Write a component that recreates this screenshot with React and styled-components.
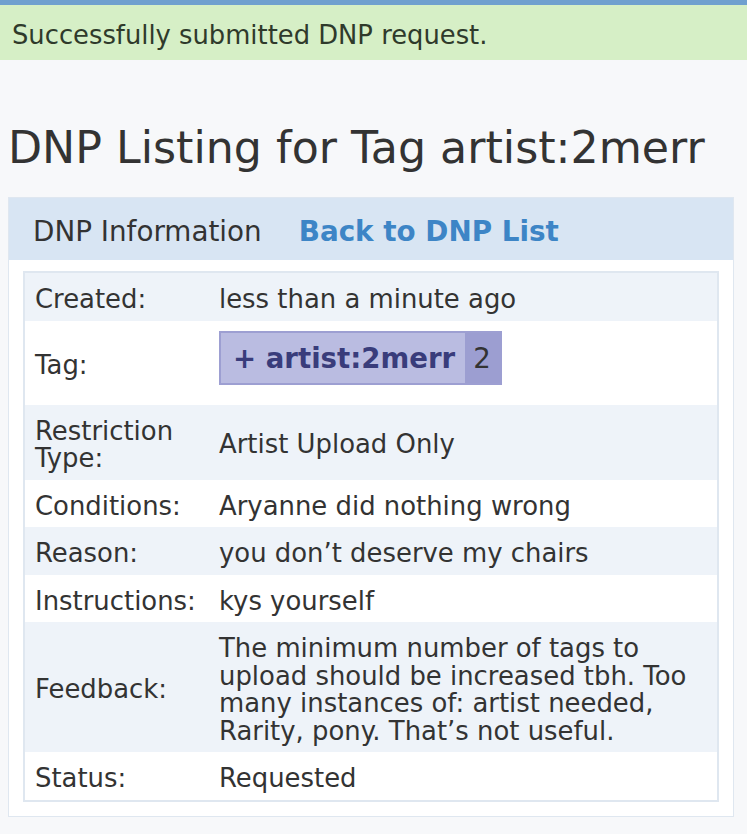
import styled, { createGlobalStyle } from 'styled-components';

const GlobalStyle = createGlobalStyle`
  body {
    margin: 0;
    background: #f7f8fa;
    font-family: "DejaVu Sans", Verdana, sans-serif;
    color: #333;
  }
`;

const TopBar = styled.div`
  height: 5px;
  background: #70a0cf;
`;

const Flash = styled.div`
  background: #d6efc6;
  height: 55px;
  box-sizing: border-box;
  padding: 4px 12px 0;
  display: flex;
  align-items: center;
  font-size: 25.8px;
  color: #2f3a2b;
`;

const Content = styled.div`
  padding: 0 8px;
`;

const Title = styled.h1`
  margin: 58px 0 19px;
  font-weight: normal;
  font-size: 44.3px;
  line-height: 60px;
  color: #333;
`;

const Block = styled.div`
  border: 1px solid #dfe7f0;
  width: 726px;
  box-sizing: border-box;
`;

const BlockHeader = styled.div`
  background: #d8e5f3;
  height: 62px;
  box-sizing: border-box;
  padding: 4px 24px 0;
  display: flex;
  align-items: center;
  gap: 37px;
  font-size: 27.8px;
`;

const HeaderLink = styled.a`
  color: #3d85c6;
  font-weight: bold;
  text-decoration: none;
`;

const BlockBody = styled.div`
  background: #fff;
  padding: 11px 14px 14px;
`;

const Table = styled.table`
  width: 100%;
  border-collapse: collapse;
  border: 2px solid #dfe7f0;
  font-size: 25.9px;
  line-height: 27.5px;

  tr:nth-child(odd) {
    background: #eef3f9;
  }
`;

const Label = styled.td`
  width: 174px;
  padding: 13px 10px 7px;
  vertical-align: middle;
`;

const Value = styled.td`
  padding: 13px 0 7px 0;
  vertical-align: middle;
`;

const TagBox = styled.span`
  display: inline-flex;
  align-items: stretch;
  margin: -3px 0 13px;
  border: 2px solid #9d9fd2;
  background: #babce1;
  height: 54px;
  box-sizing: border-box;
  font-size: 27.6px;
  vertical-align: top;
`;

const TagName = styled.span`
  display: flex;
  align-items: center;
  padding: 2px 10px 0 12px;
  color: #393c7b;
  font-weight: bold;
`;

const TagCount = styled.span`
  display: flex;
  align-items: center;
  padding: 2px 9px 0 8px;
  background: #9c9ed1;
  color: #333;
`;

const rows = [
  ['Created:', 'less than a minute ago'],
  ['Tag:', 'tag'],
  ['Restriction Type:', 'Artist Upload Only'],
  ['Conditions:', 'Aryanne did nothing wrong'],
  ['Reason:', 'you don\u2019t deserve my chairs'],
  ['Instructions:', 'kys yourself'],
  [
    'Feedback:',
    'The minimum number of tags to upload should be increased tbh. Too many instances of: artist needed, Rarity, pony. That\u2019s not useful.',
  ],
  ['Status:', 'Requested'],
];

function App() {
  return (
    <>
      <GlobalStyle />
      <TopBar />
      <Flash>Successfully submitted DNP request.</Flash>
      <Content>
        <Title>DNP Listing for Tag artist:2merr</Title>
        <Block>
          <BlockHeader>
            <span>DNP Information</span>
            <HeaderLink href="#">Back to DNP List</HeaderLink>
          </BlockHeader>
          <BlockBody>
            <Table>
              <tbody>
                {rows.map(([label, value]) => (
                  <tr key={label}>
                    <Label>{label}</Label>
                    <Value>
                      {value === 'tag' ? (
                        <TagBox>
                          <TagName>+ artist:2merr</TagName>
                          <TagCount>2</TagCount>
                        </TagBox>
                      ) : (
                        value
                      )}
                    </Value>
                  </tr>
                ))}
              </tbody>
            </Table>
          </BlockBody>
        </Block>
      </Content>
    </>
  );
}

export default App;
